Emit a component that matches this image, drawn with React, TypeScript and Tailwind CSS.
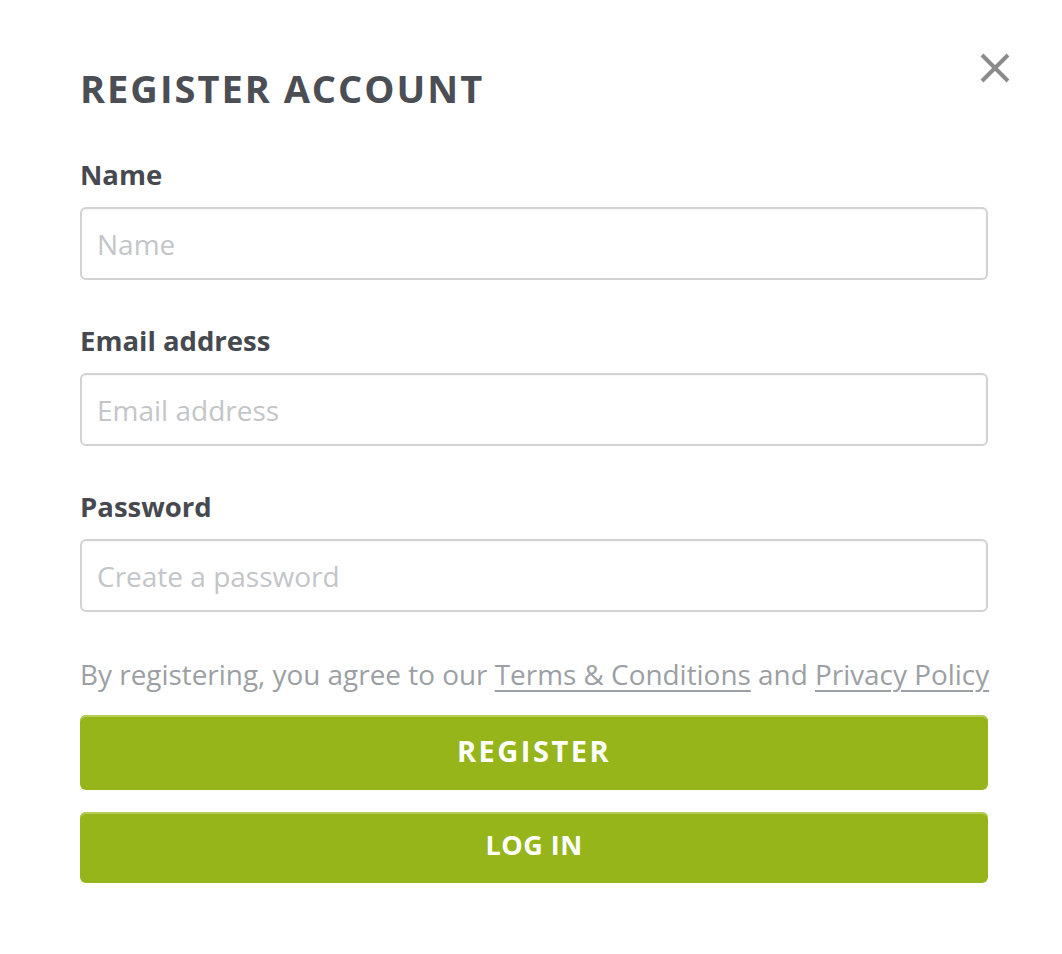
import React from 'react'

const font = { fontFamily: '"Open Sans", "Noto Sans", sans-serif' }

function Field({ label, placeholder, type = 'text' }: { label: string; placeholder: string; type?: string }) {
  return (
    <div className="flex flex-col">
      <label className="text-[27.5px] leading-[36px] font-bold text-[#46494f]">{label}</label>
      <input
        type={type}
        placeholder={placeholder}
        className="mt-[14px] h-[73px] w-full rounded-[6px] border-2 border-[#d2d2d2] bg-white px-[15px] text-[28px] text-[#46494f] placeholder:text-[#c3c5c9] outline-none shadow-[inset_0_1px_2px_rgba(0,0,0,0.04)]"
      />
    </div>
  )
}

export default function App() {
  return (
    <div className="min-h-[954px] w-full bg-white" style={font}>
      <div className="relative mx-auto w-[1062px] pl-[80px] pr-[74px] pt-[64px] pb-[70px]">
        <button className="absolute right-[52px] top-[53px] p-0 text-[#8b8b8b]" aria-label="Close">
          <svg width="30" height="30" viewBox="0 0 30 30" fill="none" stroke="currentColor" strokeWidth="4" strokeLinecap="butt">
            <path d="M2 2 L28 28 M28 2 L2 28" />
          </svg>
        </button>

        <h1 className="text-[38px] leading-[48px] font-bold tracking-[2px] text-[#4b4e54]">REGISTER ACCOUNT</h1>

        <div className="mt-[45px] flex flex-col gap-[43px]">
          <Field label="Name" placeholder="Name" />
          <Field label="Email address" placeholder="Email address" type="email" />
          <Field label="Password" placeholder="Create a password" type="password" />
        </div>

        <p className="mt-[44px] whitespace-nowrap text-[27.9px] leading-[36px] text-[#9c9fa4]">
          By registering, you agree to our <a className="underline underline-offset-[5px] decoration-[2px]">Terms &amp; Conditions</a> and{' '}
          <a className="underline underline-offset-[5px] decoration-[2px]">Privacy Policy</a>
        </p>

        <div className="mt-[23px] flex flex-col gap-[22px]">
          <button className="h-[75px] w-full rounded-[6px] bg-[#95b51b] pb-[3px] text-[29px] font-bold tracking-[2.5px] text-white shadow-[inset_0_2px_0_#b4cd55]">
            REGISTER
          </button>
          <button className="h-[71px] w-full rounded-[6px] bg-[#95b51b] pb-[5px] text-[27px] font-bold tracking-[0.5px] text-white shadow-[inset_0_2px_0_#b4cd55]">
            LOG IN
          </button>
        </div>
      </div>
    </div>
  )
}
